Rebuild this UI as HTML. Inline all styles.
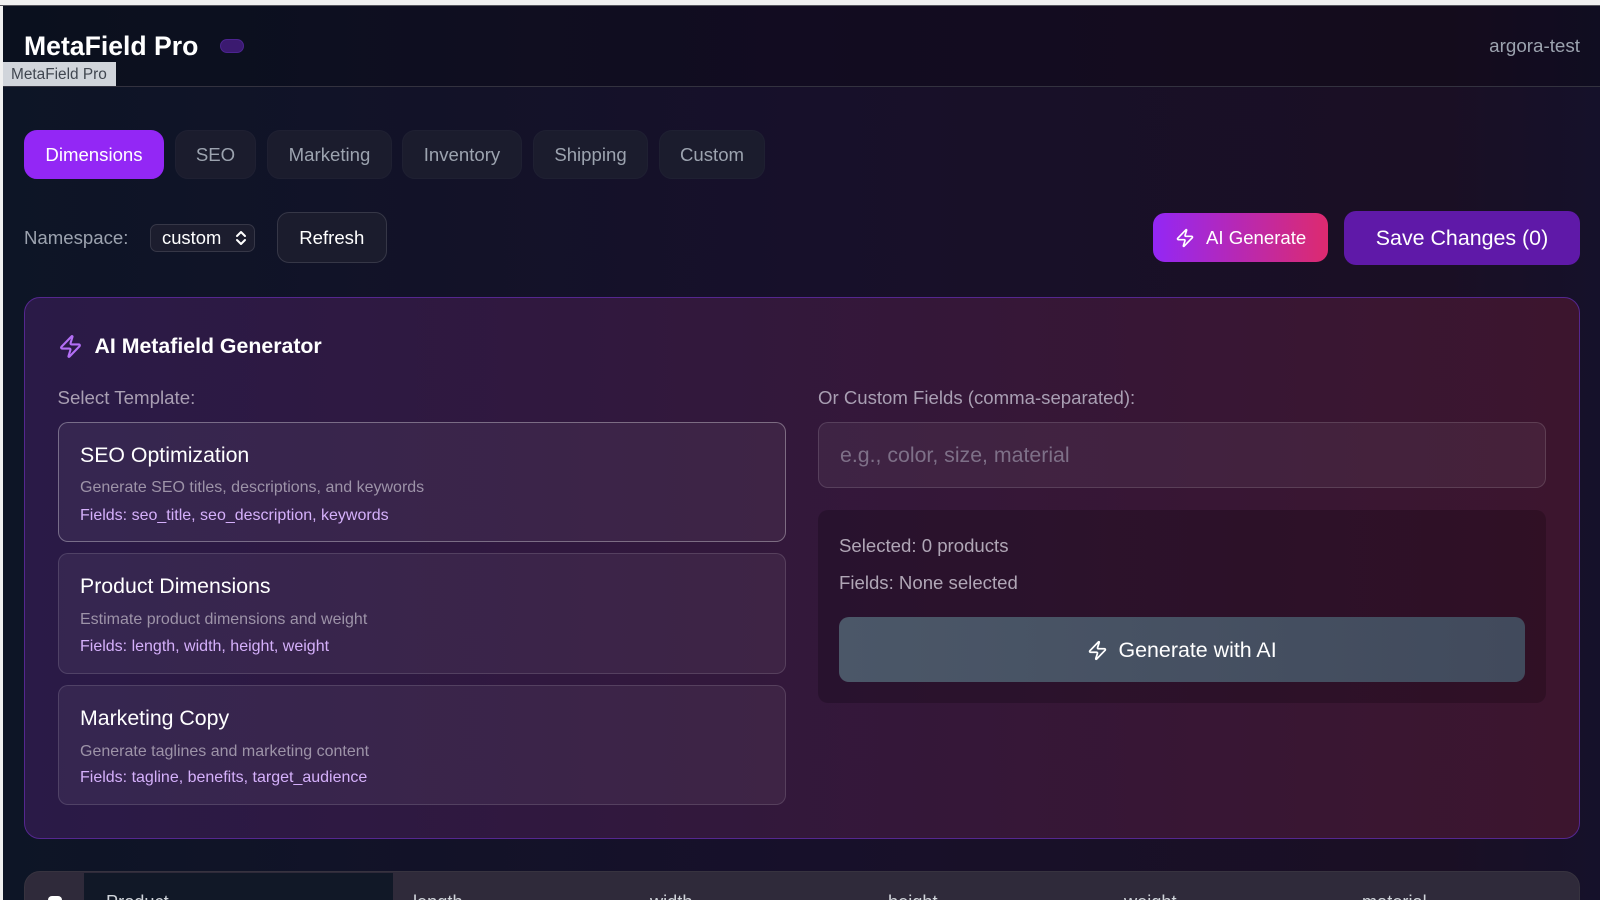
<!DOCTYPE html>
<html><head><meta charset="utf-8"><title>MetaField Pro</title>
<style>
html,body{margin:0;padding:0;width:1600px;height:900px;overflow:hidden;background:#f0f0f0}
body{position:relative;font-family:"Liberation Sans",sans-serif}
div,span.a{position:absolute;box-sizing:border-box}
.t{white-space:nowrap;height:30px;line-height:30px}
.page{left:3px;top:5px;width:1597px;height:895px;background:linear-gradient(90deg,#0d1526 0%,#17102a 50%,#1a0f24 90%,#15112a 100%);overflow:hidden}
.tab{top:130px;height:49px;border-radius:13px;background:#1b1c2d;line-height:47px;text-align:center;font-size:18.6px;color:#9ca3af;border:1px solid #1f2032}
.card{left:57.500px;width:728.500px;border-radius:10px;background:rgba(255,255,255,.055);border:1px solid rgba(255,255,255,.13)}
.h{left:80px;font-size:21.3px;color:#fff}
.d{left:80px;font-size:16px;color:#9d93a8}
.f{left:80px;font-size:16px;color:#d5b0fb}
.th{top:887px;font-size:18.2px;color:#d1d5db}
svg{position:absolute;fill:none;stroke-linecap:round;stroke-linejoin:round}
</style></head><body>
<div class="page"></div>
<div style="left:3px;top:5px;width:1597px;height:82px;background:rgba(0,0,0,.2);border-bottom:1px solid #33323f"></div>
<div style="left:0;top:5px;width:1600px;height:1px;background:#55555d"></div>
<div class="t" style="left:24px;top:31px;font-size:26.6px;font-weight:700;color:#fff">MetaField Pro</div>
<div style="left:220px;top:39px;width:24px;height:14px;border-radius:7px;background:#3b1a70;border:1px solid #4c2490"></div>
<div style="left:3px;top:62px;width:113px;height:24px;background:#d1d5db"></div>
<div class="t" style="left:11px;top:60px;font-size:15.4px;color:#404650">MetaField Pro</div>
<div class="t" style="right:20px;top:31px;font-size:18.8px;color:#9ca3af">argora-test</div>

<div class="tab" style="left:24px;width:140px;background:#9327f5;border-color:#9327f5;color:#fff">Dimensions</div>
<div class="tab" style="left:175px;width:81px">SEO</div>
<div class="tab" style="left:267px;width:125px">Marketing</div>
<div class="tab" style="left:402px;width:120px">Inventory</div>
<div class="tab" style="left:533px;width:115px">Shipping</div>
<div class="tab" style="left:659px;width:106px">Custom</div>

<div class="t" style="left:24px;top:223px;font-size:18.6px;color:#9ca3af">Namespace:</div>
<div style="left:150px;top:224px;width:105px;height:28px;border-radius:7px;background:#1c1d2e;border:1px solid #363747"></div>
<div class="t" style="left:162px;top:223px;font-size:18.4px;color:#fff">custom</div>
<svg style="left:233px;top:229px" width="16" height="18" viewBox="0 0 16 18" stroke="#fff" stroke-width="2"><path d="M4 7l4-4 4 4M4 11l4 4 4-4"/></svg>
<div style="left:276.500px;top:212px;width:110.500px;height:51px;border-radius:12px;background:#1b1c2d;border:1px solid #363747;color:#fff;font-size:18.6px;line-height:49px;text-align:center">Refresh</div>

<div style="left:1153px;top:213px;width:175px;height:49px;border-radius:12px;background:linear-gradient(90deg,#9327f5,#dd2a6f)"></div>
<svg style="left:1175px;top:228px" width="20" height="20" viewBox="0 0 24 24" stroke="#fff" stroke-width="2"><path d="M4 14a1 1 0 0 1-.78-1.63l9.9-10.2a.5.5 0 0 1 .86.46l-1.92 6.02A1 1 0 0 0 13 10h7a1 1 0 0 1 .78 1.63l-9.9 10.2a.5.5 0 0 1-.86-.46l1.92-6.02A1 1 0 0 0 11 14z"/></svg>
<div class="t" style="left:1206px;top:223px;font-size:18.6px;color:#fff">AI Generate</div>
<div style="left:1344px;top:211px;width:236px;height:54px;border-radius:12px;background:#5f19a8;color:#fff;font-size:21.4px;line-height:54px;text-align:center">Save Changes (0)</div>

<div style="left:24px;top:297px;width:1556px;height:542px;border-radius:16px;background:linear-gradient(90deg,#2a1a47,#3c152e);border:1px solid #55278f"></div>
<svg style="left:58px;top:334px" width="25" height="25" viewBox="0 0 24 24" stroke="#b36ff5" stroke-width="2"><path d="M4 14a1 1 0 0 1-.78-1.63l9.9-10.2a.5.5 0 0 1 .86.46l-1.92 6.02A1 1 0 0 0 13 10h7a1 1 0 0 1 .78 1.63l-9.9 10.2a.5.5 0 0 1-.86-.46l1.92-6.02A1 1 0 0 0 11 14z"/></svg>
<div class="t" style="left:94.500px;top:331px;font-size:21.3px;font-weight:700;color:#fff">AI Metafield Generator</div>
<div class="t" style="left:57.500px;top:383px;font-size:18.7px;color:#a99fb3">Select Template:</div>
<div class="t" style="left:818px;top:383px;font-size:18.6px;color:#a99fb3">Or Custom Fields (comma-separated):</div>

<div class="card" style="top:421.500px;height:120.500px;border-color:rgba(255,255,255,.33)"></div>
<div class="t h" style="top:440px">SEO Optimization</div>
<div class="t d" style="top:473px">Generate SEO titles, descriptions, and keywords</div>
<div class="t f" style="top:501px">Fields: seo_title, seo_description, keywords</div>

<div class="card" style="top:553px;height:121px"></div>
<div class="t h" style="top:571px">Product Dimensions</div>
<div class="t d" style="top:605px">Estimate product dimensions and weight</div>
<div class="t f" style="top:632px">Fields: length, width, height, weight</div>

<div class="card" style="top:685px;height:120px"></div>
<div class="t h" style="top:703px">Marketing Copy</div>
<div class="t d" style="top:737px">Generate taglines and marketing content</div>
<div class="t f" style="top:763px">Fields: tagline, benefits, target_audience</div>

<div style="left:818px;top:422px;width:728px;height:66px;border-radius:10px;background:rgba(255,255,255,.055);border:1px solid rgba(255,255,255,.13)"></div>
<div class="t" style="left:840px;top:440px;font-size:21.3px;color:#7e7088">e.g., color, size, material</div>

<div style="left:818px;top:510px;width:728px;height:193px;border-radius:10px;background:rgba(0,0,0,.2)"></div>
<div class="t" style="left:839px;top:531px;font-size:18.6px;color:#b0a6b6">Selected: 0 products</div>
<div class="t" style="left:839px;top:568px;font-size:18.6px;color:#b0a6b6">Fields: None selected</div>
<div style="left:839px;top:617px;width:686px;height:65px;border-radius:10px;background:linear-gradient(90deg,#4b5768,#414a5c)"></div>
<svg style="left:1087px;top:640px" width="21" height="21" viewBox="0 0 24 24" stroke="#fff" stroke-width="2"><path d="M4 14a1 1 0 0 1-.78-1.63l9.9-10.2a.5.5 0 0 1 .86.46l-1.92 6.02A1 1 0 0 0 13 10h7a1 1 0 0 1 .78 1.63l-9.9 10.2a.5.5 0 0 1-.86-.46l1.92-6.02A1 1 0 0 0 11 14z"/></svg>
<div class="t" style="left:1118.500px;top:635px;font-size:21.4px;color:#fff">Generate with AI</div>

<div style="left:24px;top:871px;width:1556px;height:60px;border-radius:16px;background:#2f2a3a;border:1px solid #37333f"></div>
<div style="left:84px;top:873px;width:309px;height:27px;background:#111827"></div>
<div style="left:48px;top:896px;width:14px;height:14px;border-radius:4px;background:#fff"></div>
<div class="t th" style="left:106px">Product</div>
<div class="t th" style="left:413px">length</div>
<div class="t th" style="left:650px">width</div>
<div class="t th" style="left:888px">height</div>
<div class="t th" style="left:1124px">weight</div>
<div class="t th" style="left:1362px">material</div>
</body></html>
